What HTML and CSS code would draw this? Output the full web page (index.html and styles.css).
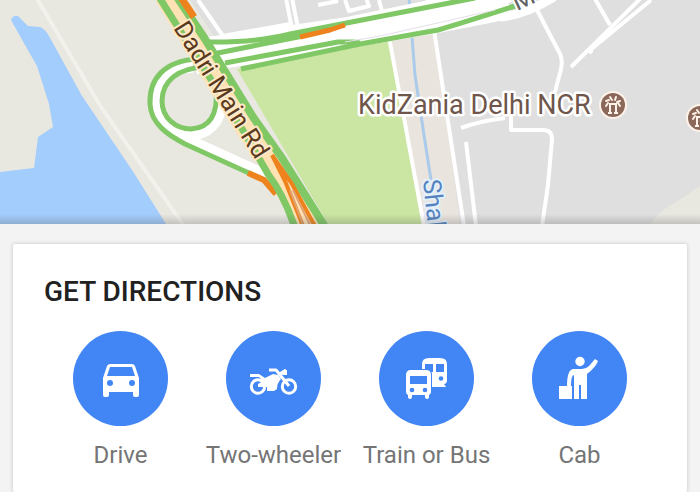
FILE: index.html
```html
<!DOCTYPE html>
<html lang="en">
<head>
<meta charset="utf-8">
<meta name="viewport" content="width=device-width, initial-scale=1">
<title>Get directions</title>
<link rel="stylesheet" href="styles.css">
</head>
<body>
<section class="map" aria-label="Map">
<svg class="map-canvas" viewBox="0 0 700 224">
  <defs>
    <linearGradient id="edge" x1="0" y1="0" x2="0" y2="1">
      <stop offset="0" stop-color="#555" stop-opacity="0"/>
      <stop offset="1" stop-color="#555" stop-opacity=".25"/>
    </linearGradient>
    <g id="poi">
      <circle r="14" fill="#fff3e9"/>
      <circle r="12" fill="#8b6859"/>
      <g fill="none" stroke="#fff3e9" stroke-width="2">
        <path d="M-3 8V-1H3V8M-5 8H-1M1 8H5"/>
        <path d="M-7 1l2-3M-7-4l3-1M-3-8l2 3M3-8l-1 3M7-4l-3 1M7 1l-2-3" stroke-linecap="round"/>
      </g>
    </g>
  </defs>
  <rect width="700" height="224" fill="#e8e7e0"/>
  <path fill="#dfdfe0" d="M190 0H700V224H459L435 34 217 41Z"/>
  <path fill="#e8e7e0" d="M651 224Q658 211 673 204L700 186V224Z"/>
  <path fill="#eae4de" d="M388 38L435 30 460 224H422Z"/>
  <path fill="#cbe6a3" d="M237 69L388 39 423 224H328Z"/>
  <path fill="#a3cdfc" d="M11 20Q13 15 18 16L28 26 40 27Q45 29 49 36L82 96 132 170 166 224H0V172L34 168 38 137 53 127 49 104 37 66 25 45Z"/>
  <g fill="none" stroke="#f2f1ec" stroke-width="4">
    <path d="M36-3L101 107 184 226"/>
  </g>
  <g fill="none" stroke="#fff" stroke-width="4" stroke-linejoin="round">
    <path d="M198 0L223 36 290 24M286-2l6 31M292-2l6 30M318 5l20-4M345 0l4 11 20-5-3-8"/>
    <path d="M389 37L424 226M434 30L464 226M379 0l4 15M427 0l3 10"/>
    <path d="M461 128Q480 121 505 118M466 142L476 226"/>
    <path d="M536 8L560 54Q563 60 561 69L555 92M511 116V130H543Q552 130 552 139L548 185 542 226"/>
    <path d="M594-3L610 25M571 67L641-2M589 51L651 0M589 50l3 3"/>
  </g>
  <path d="M409-2L415 75 424 135 431 180" fill="none" stroke="#aacbea" stroke-width="3"/>
  <g fill="none" stroke-linejoin="round">
    <path d="M195 65L218 60 370 35Q450 22 510 9M205 47L345 27 510-7" stroke="#fff" stroke-width="19"/>
    <path d="M500 17Q525 15 554-3" stroke="#fff" stroke-width="9"/>
    <path d="M205 42Q255 43 290 34L475-2" stroke="#80c866" stroke-width="5"/>
    <path d="M198 58L218 53 298 37 330 27" stroke="#80c866" stroke-width="5"/>
    <path d="M300 37L330 30 345 25" stroke="#ee831d" stroke-width="5"/>
    <path d="M225 63L338 42H353L360 43" stroke="#80c866" stroke-width="5"/>
    <path d="M241 69L360 44 438 30Q465 22 515 6" stroke="#80c866" stroke-width="5"/>
    <path d="M345 42L380 36 495 10" stroke="#e4dfe9" stroke-width="1"/>
    <path d="M193 66C164 68 154 84 155 103C156 119 169 131 184 139L261 174Q282 181 292 201" stroke="#fff" stroke-width="13"/>
    <path d="M166 123Q181 140 201 132C217 126 223 110 219 87" stroke="#fff" stroke-width="13"/>
    <path d="M197 59C164 61 149 79 150 104C151 124 168 135 185 144L251 174" stroke="#80c866" stroke-width="5"/>
    <path d="M205 67C178 68 162 81 162 101C162 118 176 129 191 129C210 128 218 114 216 90" stroke="#80c866" stroke-width="5"/>
    <path d="M166-5L243 121 270 160 310 229" stroke="#ffe2b4" stroke-width="24"/>
    <path d="M248 173L264 180 276 194" stroke="#ee831d" stroke-width="6"/>
    <path d="M159-3L244 132 268 174Q284 195 295 228" stroke="#80c866" stroke-width="7"/>
    <path d="M177-3L205 39 253 117 282 158 327 230" stroke="#80c866" stroke-width="8"/>
    <path d="M180-4L194 17" stroke="#ee831d" stroke-width="7"/>
    <path d="M272 155L285 181 303 226M272 155L292 184 316 228" stroke="#ee831d" stroke-width="4"/>
    <path d="M290 190L304 227M293 190L311 227" stroke="#e0a273" stroke-width="2"/>
  </g>
  <text class="road" transform="translate(173 28) rotate(58)">Dadri Main Rd</text>
  <text class="road road-plain" transform="translate(517 11) rotate(-25)">M</text>
  <text class="river" transform="translate(423 180) rotate(84)">Shal</text>
  <text class="place" x="358" y="114">KidZania Delhi NCR</text>
  <use href="#poi" x="613" y="105"/>
  <use href="#poi" x="700" y="118"/>
  <rect y="214" width="700" height="10" fill="url(#edge)"/>
</svg>
</section>
<main class="sheet">
  <section class="card">
    <h1 class="title">GET DIRECTIONS</h1>
    <div class="modes">
      <button class="mode" type="button">
        <svg class="icon" viewBox="0 0 95 95" aria-hidden="true">
          <path fill="#fff" fill-rule="evenodd" d="M37 33H59Q61 33 62 35L66 47V64Q66 66 64 66H62Q60 66 60 64V61H36V64Q36 66 34 66H32Q30 66 30 64V47L34 35Q35 33 37 33ZM37 36L34 45H62L59 36Z"/>
          <circle cx="37" cy="52" r="3" fill="#4285f4"/><circle cx="59" cy="52" r="3" fill="#4285f4"/>
        </svg>
        <span>Drive</span>
      </button>
      <button class="mode" type="button">
        <svg class="icon" viewBox="0 0 95 95" aria-hidden="true">
          <g fill="none" stroke="#fff" stroke-width="3">
            <circle cx="32" cy="55.500" r="6.700"/><circle cx="63" cy="55.500" r="6.700"/>
            <path d="M43 39H50L63 55M52 44L60 39" stroke-linejoin="round"/>
          </g>
          <path fill="#fff" d="M24 43H33L39 47 47 43 52 44 55 48Q51 52 51 58L48 60H41V56H32V53L37 50 33 46H24ZM55 43L58 39H61V44H57Z"/>
        </svg>
        <span>Two-wheeler</span>
      </button>
      <button class="mode" type="button">
        <svg class="icon" viewBox="0 0 95 95" aria-hidden="true">
          <path fill="#fff" d="M43 40V33Q43 27 50 27H61Q68 27 68 33V49Q68 53 65 53L67 56H53V44Q52 38 46 38H43Z"/>
          <path fill="#4285f4" d="M46 33H54V41H46ZM57 33H65V41H57Z"/>
          <circle cx="62" cy="47.500" r="2.300" fill="#4285f4"/>
          <path fill="#fff" stroke="#4285f4" stroke-width="2" paint-order="stroke" d="M27 44Q27 39 32 39H47Q52 39 52 44V61Q52 63 50 64V66Q50 68 48 68Q46 68 46 66V64H33V66Q33 68 31 68Q29 68 29 66V64Q27 63 27 61Z"/>
          <path fill="#4285f4" d="M31 45H48V53H31Z"/>
          <circle cx="33" cy="59" r="2.300" fill="#4285f4"/><circle cx="46" cy="59" r="2.300" fill="#4285f4"/>
        </svg>
        <span>Train or Bus</span>
      </button>
      <button class="mode" type="button">
        <svg class="icon" viewBox="0 0 95 95" aria-hidden="true">
          <circle cx="48" cy="30.500" r="4.700" fill="#fff"/>
          <path fill="#fff" d="M41 38H50Q54 38 57 35L63 28 66 30Q64 36 55 43V68H49V54H47V68H42V44Q39 44 39 55H40V68H27V55H35Q35 39 41 38Z"/>
        </svg>
        <span>Cab</span>
      </button>
    </div>
  </section>
</main>
</body>
</html>
```
FILE: styles.css
```css
* {
  box-sizing: border-box;
}

body {
  margin: 0;
  background: #f3f3f3;
  color: #212121;
  font-family: Roboto, "Liberation Sans", sans-serif;
  overflow-x: hidden;
}

.map-canvas {
  display: block;
  width: 100%;
}

.road,
.river,
.place {
  font-size: 25px;
  paint-order: stroke;
  stroke-linejoin: round;
}

.road {
  fill: #5a3a1c;
  stroke: #ffe9c8;
  stroke-width: 4px;
}

.road-plain {
  fill: #616161;
  stroke: #fff;
}

.river {
  fill: #5583c0;
  stroke: #e3f0fa;
  stroke-width: 4px;
}

.place {
  fill: #6f564b;
  stroke: #fff;
  stroke-width: 5px;
  font-size: 27px;
}

.sheet {
  padding: 20px 13px 0;
}

.card {
  padding: 32px 31px 22px;
  background: #fff;
  border-radius: 2px;
  box-shadow: 0 0 4px rgba(0, 0, 0, 0.2);
}

.title {
  margin: 0;
  font-size: 28px;
  line-height: 32px;
  font-weight: 500;
}

.modes {
  display: grid;
  grid-template-columns: repeat(4, 1fr);
  margin-top: 23px;
}

.mode {
  display: flex;
  flex-direction: column;
  align-items: center;
  gap: 14px;
  padding: 0;
  border: 0;
  background: none;
  color: #757575;
  font: 24px/30px Roboto, "Liberation Sans", sans-serif;
  white-space: nowrap;
  cursor: pointer;
}

.icon {
  width: 95px;
  height: 95px;
  border-radius: 50%;
  background: #4285f4;
}
```
